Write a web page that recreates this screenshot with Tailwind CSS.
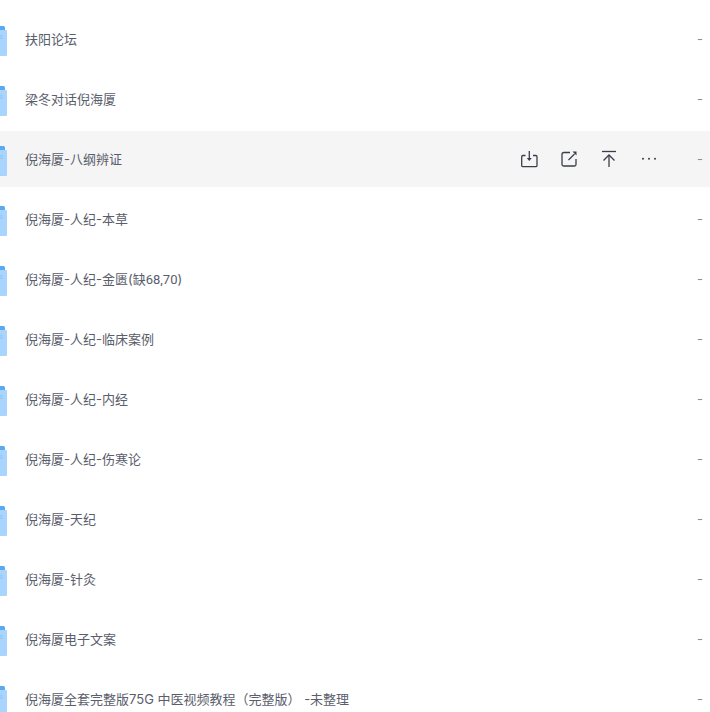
<!DOCTYPE html>
<html lang="en">
<head>
<meta charset="UTF-8">
<title>Files</title>
<script src="https://cdn.jsdelivr.net/npm/@tailwindcss/browser@4"></script>
</head>
<body class="bg-white overflow-hidden">
<svg class="hidden">
  <symbol id="folder" viewBox="0 0 7 30">
    <path d="M0 0h3.500q1.500 0 1.500 1.500V5H0z" fill="#5aa9f2"/>
    <path d="M0 4h6q1 0 1 1v24q0 1-1 1H0z" fill="#a9d4fe"/>
    <path d="M0 9.500h3v1H0zM0 11.800h3v1H0z" fill="#8cc4f8"/>
  </symbol>
</svg>
<div class="h-[712px] overflow-hidden pt-[11px] flex flex-col gap-1 font-['Inter','Noto_Sans_CJK_SC',sans-serif] text-[13px] text-[#5a5d6b]">

  <div class="h-14 shrink-0 flex items-center">
    <svg class="w-[7px] h-[30px] shrink-0 mt-1"><use href="#folder"/></svg>
    <span class="ml-[18px] pt-[1px]">扶阳论坛</span>
    <span class="ml-auto mr-[7px] pt-[2px] text-[#8a8d99]">-</span>
  </div>

  <div class="h-14 shrink-0 flex items-center">
    <svg class="w-[7px] h-[30px] shrink-0 mt-1"><use href="#folder"/></svg>
    <span class="ml-[18px] pt-[1px]">梁冬对话倪海厦</span>
    <span class="ml-auto mr-[7px] pt-[2px] text-[#8a8d99]">-</span>
  </div>

  <div class="h-14 shrink-0 flex items-center bg-[#f5f5f5]">
    <svg class="w-[7px] h-[30px] shrink-0 mt-1"><use href="#folder"/></svg>
    <span class="ml-[18px] pt-[1px]">倪海厦-八纲辨证</span>
    <div class="ml-auto flex items-center gap-[20px] text-[#3b3e4a]">
      <svg class="w-5 h-5" viewBox="0 0 20 20" fill="none" stroke="currentColor" stroke-width="1.300"><path d="M6.500 6.500H4q-1.300 0-1.300 1.300v8.600q0 1.300 1.300 1.300h12.700q1.300 0 1.300-1.300V7.800q0-1.300-1.300-1.300H14"/><path d="M10.300 2v9"/><path d="M7.800 9 10.300 12l2.500-3z" fill="currentColor" stroke="none"/></svg>
      <svg class="w-5 h-5" viewBox="0 0 20 20" fill="none" stroke="currentColor" stroke-width="1.300"><path d="M11 3.500H5q-2 0-2 2v10q0 1.500 1.500 1.500h11q1.500 0 1.500-1.500V10"/><path d="M9.500 11 15.500 5"/><path d="M13.500 2.500h4v4z" fill="currentColor" stroke="none"/></svg>
      <svg class="w-5 h-5" viewBox="0 0 20 20" fill="none" stroke="currentColor" stroke-width="1.300"><path d="M3 2.500h14"/><path d="M10 18V6"/><path d="M4.500 11.500 10 6l5.500 5.500"/></svg>
      <svg class="w-5 h-5" viewBox="0 0 20 20" fill="currentColor"><circle cx="4" cy="9.700" r="1"/><circle cx="10" cy="9.700" r="1"/><circle cx="16" cy="9.700" r="1"/></svg>
    </div>
    <span class="ml-[38px] mr-[7px] pt-[2px] text-[#8a8d99]">-</span>
  </div>

  <div class="h-14 shrink-0 flex items-center">
    <svg class="w-[7px] h-[30px] shrink-0 mt-1"><use href="#folder"/></svg>
    <span class="ml-[18px] pt-[1px]">倪海厦-人纪-本草</span>
    <span class="ml-auto mr-[7px] pt-[2px] text-[#8a8d99]">-</span>
  </div>

  <div class="h-14 shrink-0 flex items-center">
    <svg class="w-[7px] h-[30px] shrink-0 mt-1"><use href="#folder"/></svg>
    <span class="ml-[18px] pt-[1px]">倪海厦-人纪-金匮(缺<span class="font-['Roboto']">68,70</span>)</span>
    <span class="ml-auto mr-[7px] pt-[2px] text-[#8a8d99]">-</span>
  </div>

  <div class="h-14 shrink-0 flex items-center">
    <svg class="w-[7px] h-[30px] shrink-0 mt-1"><use href="#folder"/></svg>
    <span class="ml-[18px] pt-[1px]">倪海厦-人纪-临床案例</span>
    <span class="ml-auto mr-[7px] pt-[2px] text-[#8a8d99]">-</span>
  </div>

  <div class="h-14 shrink-0 flex items-center">
    <svg class="w-[7px] h-[30px] shrink-0 mt-1"><use href="#folder"/></svg>
    <span class="ml-[18px] pt-[1px]">倪海厦-人纪-内经</span>
    <span class="ml-auto mr-[7px] pt-[2px] text-[#8a8d99]">-</span>
  </div>

  <div class="h-14 shrink-0 flex items-center">
    <svg class="w-[7px] h-[30px] shrink-0 mt-1"><use href="#folder"/></svg>
    <span class="ml-[18px] pt-[1px]">倪海厦-人纪-伤寒论</span>
    <span class="ml-auto mr-[7px] pt-[2px] text-[#8a8d99]">-</span>
  </div>

  <div class="h-14 shrink-0 flex items-center">
    <svg class="w-[7px] h-[30px] shrink-0 mt-1"><use href="#folder"/></svg>
    <span class="ml-[18px] pt-[1px]">倪海厦-天纪</span>
    <span class="ml-auto mr-[7px] pt-[2px] text-[#8a8d99]">-</span>
  </div>

  <div class="h-14 shrink-0 flex items-center">
    <svg class="w-[7px] h-[30px] shrink-0 mt-1"><use href="#folder"/></svg>
    <span class="ml-[18px] pt-[1px]">倪海厦-针灸</span>
    <span class="ml-auto mr-[7px] pt-[2px] text-[#8a8d99]">-</span>
  </div>

  <div class="h-14 shrink-0 flex items-center">
    <svg class="w-[7px] h-[30px] shrink-0 mt-1"><use href="#folder"/></svg>
    <span class="ml-[18px] pt-[1px]">倪海厦电子文案</span>
    <span class="ml-auto mr-[7px] pt-[2px] text-[#8a8d99]">-</span>
  </div>

  <div class="h-14 shrink-0 flex items-center">
    <svg class="w-[7px] h-[30px] shrink-0 mt-1"><use href="#folder"/></svg>
    <span class="ml-[18px] pt-[1px]">倪海厦全套完整版75G 中医视频教程（完整版） -未整理</span>
    <span class="ml-auto mr-[7px] pt-[2px] text-[#8a8d99]">-</span>
  </div>

</div>
</body>
</html>
